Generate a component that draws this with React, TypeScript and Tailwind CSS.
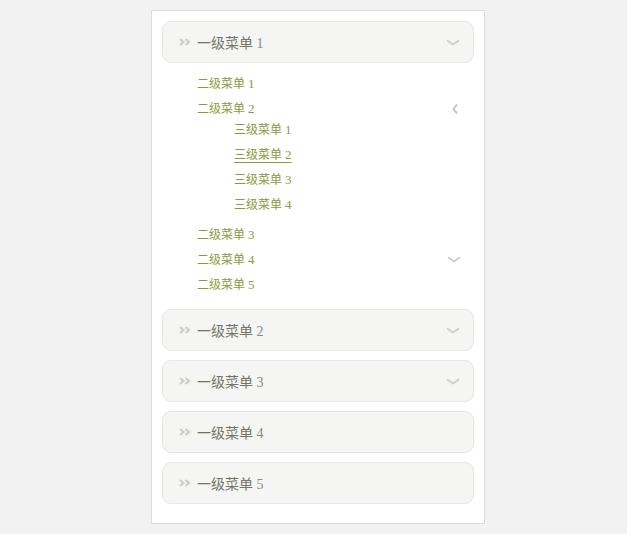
const menus = [
  { id: 1, label: "一级菜单", num: "1", open: true, arrow: true },
  { id: 2, label: "一级菜单", num: "2", open: false, arrow: true },
  { id: 3, label: "一级菜单", num: "3", open: false, arrow: true },
  { id: 4, label: "一级菜单", num: "4", open: false, arrow: false },
  { id: 5, label: "一级菜单", num: "5", open: false, arrow: false },
];

const subMenus = [
  { id: 1, icon: "" },
  { id: 2, icon: "left" },
  { id: 3, icon: "" },
  { id: 4, icon: "down" },
  { id: 5, icon: "" },
];

const thirdMenus = [1, 2, 3, 4];

function ChevronDown() {
  return (
    <svg width="14" height="7" viewBox="0 0 14 7" fill="none">
      <path d="M1 1.2 L7 5.5 L13 1.2" stroke="#cfcfcf" strokeWidth="2" strokeLinejoin="round" />
    </svg>
  );
}

function ChevronLeft() {
  return (
    <svg width="6" height="10" viewBox="0 0 6 10" fill="none">
      <path d="M5 0.5 L1.5 5 L5 9.5" stroke="#c4c4c4" strokeWidth="2" />
    </svg>
  );
}

// double chevron in front of the first level labels
function Guillemet() {
  return (
    <svg width="12" height="8" viewBox="0 0 12 8" fill="none">
      <path d="M1 1 L4.5 4 L1 7 M6.5 1 L10 4 L6.5 7" stroke="#cccccc" strokeWidth="2.2" />
    </svg>
  );
}

export default function App() {
  return (
    <div className="min-h-[534px] w-full bg-[#f2f2f2] pt-[10px] font-['Liberation_Serif','Noto_Sans_CJK_SC',serif]">
      <div className="ml-[151px] w-[334px] border border-[#dcdcdc] bg-white p-[10px] pb-[1px]">
        {menus.map((menu) => (
          <div key={menu.id} className="mb-[9px]">
            <div className="flex h-[42px] items-center rounded-[9px] border border-[#e7e7e5] bg-[#f5f5f3] pl-[16px] pr-[13px]">
              <span className="mr-[6px] flex">
                <Guillemet />
              </span>
              <span className="pt-[2px] text-[14px] text-[#737366]">
                {menu.label} <span className="text-[#8a8a7a]">{menu.num}</span>
              </span>
              {menu.arrow && (
                <span className="ml-auto flex">
                  <ChevronDown />
                </span>
              )}
            </div>
            {menu.open && (
              <ul className="pl-[35px] pr-[13px] pt-[8px] pb-[3px] text-[12px] text-[#8b9a3e]">
                {subMenus.map((sub) => (
                  <li key={sub.id}>
                    <div className="flex h-[25px] items-center">
                      <span>
                        二级菜单 <span className="text-[13px]">{sub.id}</span>
                      </span>
                      {sub.icon === "left" && (
                        <span className="ml-auto mr-[3px] flex">
                          <ChevronLeft />
                        </span>
                      )}
                      {sub.icon === "down" && (
                        <span className="ml-auto flex">
                          <ChevronDown />
                        </span>
                      )}
                    </div>
                    {sub.id === 2 && (
                      <ul className="-mt-[4px] mb-[5px] pl-[37px]">
                        {thirdMenus.map((n) => (
                          <li key={n} className="flex h-[25px] items-center">
                            <span className={n === 2 ? "underline underline-offset-[3px]" : ""}>
                              三级菜单 <span className="text-[13px]">{n}</span>
                            </span>
                          </li>
                        ))}
                      </ul>
                    )}
                  </li>
                ))}
              </ul>
            )}
          </div>
        ))}
        <div className="h-[9px]" />
      </div>
    </div>
  );
}
